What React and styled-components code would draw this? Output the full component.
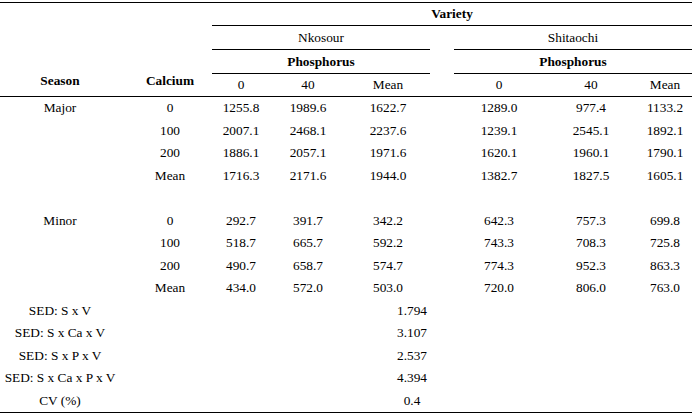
import styled, { createGlobalStyle } from 'styled-components'

const GlobalStyle = createGlobalStyle`
    body {
        margin: 0;
        background: #fff;
    }
`

const COLS = '120px 92px 58px 76px 84px 24px 90px 94px 54px'

const Sheet = styled.div`
    width: 692px;
    margin-top: 2px;
    border-top: 1px solid #000;
    border-bottom: 1px solid #000;
    font-family: 'Times New Roman', 'Liberation Serif', Tinos, serif;
    font-size: 13.33px;
    color: #000;
`

const Head = styled.div`
    display: grid;
    grid-template-columns: ${COLS};
    grid-template-rows: 23px 24px 24px 22px;
    border-bottom: 1px solid #000;
`

const Body = styled.div`
    display: grid;
    grid-template-columns: ${COLS};
    grid-auto-rows: 22.5px;
`

const Cell = styled.div`
    box-sizing: border-box;
    display: flex;
    align-items: center;
    justify-content: center;
    white-space: nowrap;
    grid-column: ${p => p.$col || 'auto'};
    grid-row: ${p => p.$row || 'auto'};
    font-weight: ${p => (p.$bold ? 700 : 400)};
    border-bottom: ${p => (p.$rule ? '1px solid #000' : 'none')};
    padding-left: ${p => p.$inset || 0}px;
`

const Stub = styled(Cell)`
    align-items: flex-end;
    padding-bottom: 7px;
`

const groups = [
    {
        season: 'Major',
        rows: [
            ['0', '1255.8', '1989.6', '1622.7', '1289.0', '977.4', '1133.2'],
            ['100', '2007.1', '2468.1', '2237.6', '1239.1', '2545.1', '1892.1'],
            ['200', '1886.1', '2057.1', '1971.6', '1620.1', '1960.1', '1790.1'],
            ['Mean', '1716.3', '2171.6', '1944.0', '1382.7', '1827.5', '1605.1'],
        ],
    },
    {
        season: 'Minor',
        rows: [
            ['0', '292.7', '391.7', '342.2', '642.3', '757.3', '699.8'],
            ['100', '518.7', '665.7', '592.2', '743.3', '708.3', '725.8'],
            ['200', '490.7', '658.7', '574.7', '774.3', '952.3', '863.3'],
            ['Mean', '434.0', '572.0', '503.0', '720.0', '806.0', '763.0'],
        ],
    },
]

const stats = [
    ['SED: S x V', '1.794'],
    ['SED: S x Ca x V', '3.107'],
    ['SED: S x P x V', '2.537'],
    ['SED: S x Ca x P x V', '4.394'],
    ['CV (%)', '0.4'],
]

// data columns, skipping the spacer between the two varieties
const dataCols = [3, 4, 5, 7, 8, 9]

function DataRow({ season, row }) {
    const [calcium, ...values] = row
    return (
        <>
            <Cell $col="1">{season}</Cell>
            <Cell $col="2" $inset={8}>{calcium}</Cell>
            {values.map((v, i) => (
                <Cell key={i} $col={String(dataCols[i])}>{v}</Cell>
            ))}
        </>
    )
}

export default function App() {
    return (
        <>
            <GlobalStyle />
            <Sheet>
                <Head>
                    <Stub $col="1" $row="1 / 5" $bold>Season</Stub>
                    <Stub $col="2" $row="1 / 5" $bold $inset={8}>Calcium</Stub>
                    <Cell $col="3 / 10" $row="1" $bold $rule>Variety</Cell>

                    <Cell $col="3 / 6" $row="2" $rule>Nkosour</Cell>
                    <Cell $col="7 / 10" $row="2" $rule>Shitaochi</Cell>

                    <Cell $col="3 / 6" $row="3" $bold $rule>Phosphorus</Cell>
                    <Cell $col="7 / 10" $row="3" $bold $rule>Phosphorus</Cell>

                    <Cell $col="3" $row="4">0</Cell>
                    <Cell $col="4" $row="4">40</Cell>
                    <Cell $col="5" $row="4">Mean</Cell>
                    <Cell $col="7" $row="4">0</Cell>
                    <Cell $col="8" $row="4">40</Cell>
                    <Cell $col="9" $row="4">Mean</Cell>
                </Head>
                <Body>
                    {groups.map((g, gi) => (
                        <>
                            {gi > 0 && <Cell $col="1 / 10" />}
                            {g.rows.map((r, ri) => (
                                <DataRow key={gi + '-' + ri} season={ri === 0 ? g.season : ''} row={r} />
                            ))}
                        </>
                    ))}
                    {stats.map(([label, value]) => (
                        <>
                            <Cell $col="1">{label}</Cell>
                            <Cell $col="5 / 7" $inset={24}>{value}</Cell>
                        </>
                    ))}
                </Body>
            </Sheet>
        </>
    )
}
